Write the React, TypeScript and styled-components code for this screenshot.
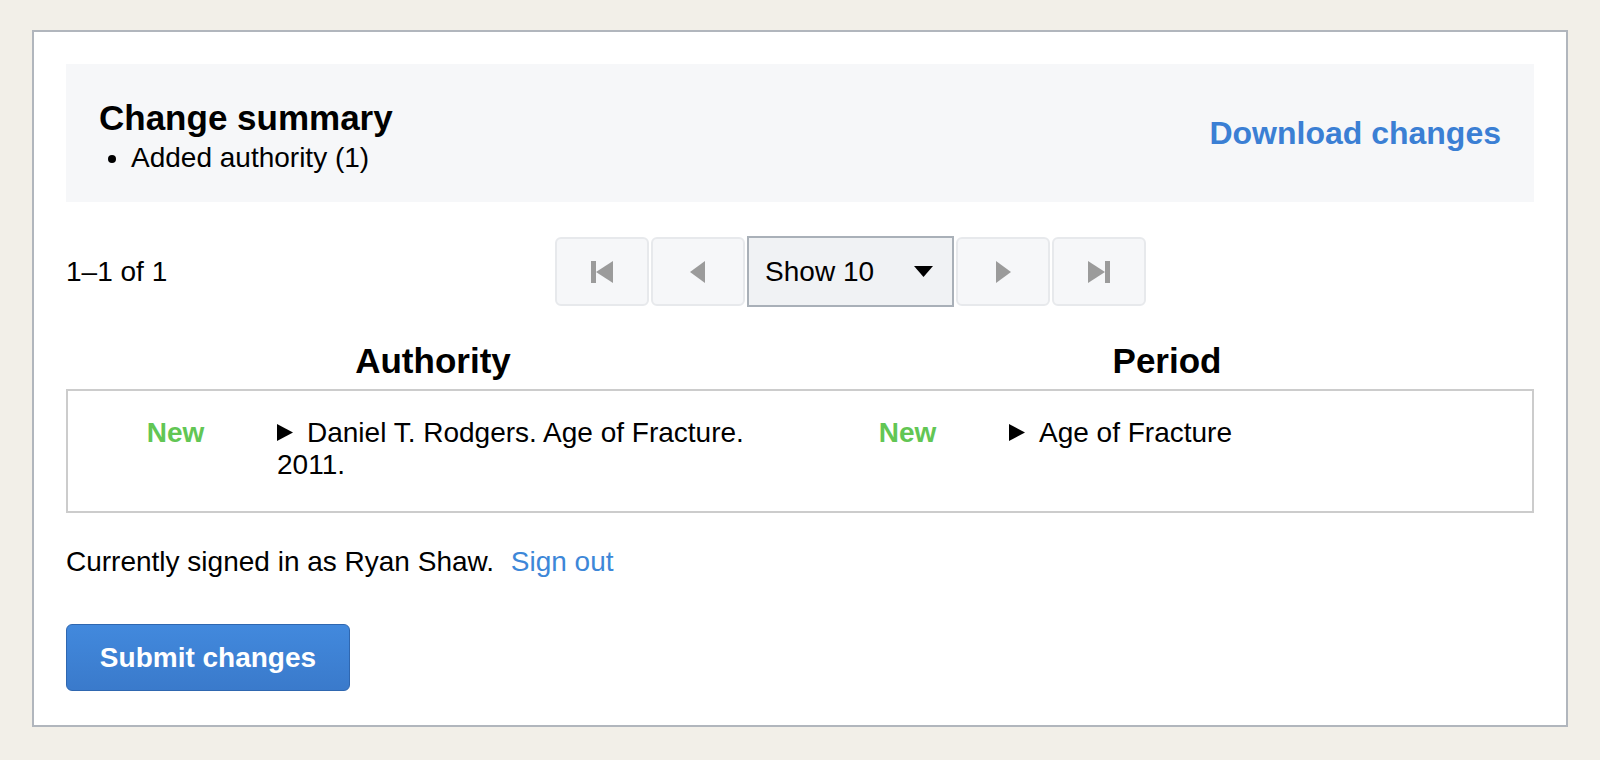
import React from "react";
import styled, { createGlobalStyle } from "styled-components";

const GlobalStyle = createGlobalStyle`
  html, body { margin: 0; padding: 0; }
  body {
    background: #f2efe8;
    font-family: "Liberation Sans", Arial, Helvetica, sans-serif;
    font-size: 28px;
    color: #000;
  }
  * { box-sizing: border-box; }
`;

const Page = styled.div`
  padding: 30px 32px 34px;
`;

const Card = styled.main`
  background: #fff;
  border: 2px solid #b1b6bd;
  padding: 32px 32px 34px;
  display: flex;
  flex-direction: column;
`;

const Summary = styled.section`
  display: flex;
  justify-content: space-between;
  align-items: center;
  background: #f6f7f9;
  padding: 34px 33px 28px 33px;
`;

const SummaryText = styled.div`
  display: flex;
  flex-direction: column;
`;

const Heading = styled.h2`
  margin: 0;
  font-size: 35px;
  line-height: 40px;
  font-weight: bold;
`;

const List = styled.ul`
  margin: 4px 0 0;
  padding-left: 32px;
  line-height: 32px;
`;

const DownloadLink = styled.a`
  margin-bottom: 6px;
  font-size: 32px;
  font-weight: bold;
  color: #3b7fd4;
  text-decoration: none;
  cursor: pointer;
`;

const PagerRow = styled.div`
  display: flex;
  align-items: center;
  margin-top: 34px;
`;

const Count = styled.span`
  flex: none;
  line-height: 32px;
`;

const Pager = styled.nav`
  flex: 1;
  display: flex;
  justify-content: center;
  align-items: center;
  gap: 2px;
`;

const PagerButton = styled.button`
  width: 94px;
  height: 69px;
  display: flex;
  align-items: center;
  justify-content: center;
  background: #f6f7f9;
  border: 2px solid #e7e9ec;
  border-radius: 6px;
  padding: 0;
  cursor: pointer;
`;

const Select = styled.div`
  width: 207px;
  height: 71px;
  display: flex;
  align-items: center;
  justify-content: space-between;
  padding: 0 19px 0 16px;
  background: #f0f2f4;
  border: 2px solid #a9b0b8;
  font-size: 28px;
`;

const HeadRow = styled.div`
  display: grid;
  grid-template-columns: 1fr 1fr;
  margin-top: 34px;
`;

const ColumnTitle = styled.h3`
  margin: 0;
  font-size: 35px;
  line-height: 40px;
  font-weight: bold;
  text-align: center;
`;

const ChangeTable = styled.div`
  margin-top: 8px;
  border: 2px solid #cccccc;
  display: grid;
  grid-template-columns: 1fr 1fr;
  padding: 26px 0 30px;
`;

const Half = styled.div`
  display: grid;
  grid-template-columns: 209px 1fr;
  align-items: start;
  line-height: 32px;
`;

const Status = styled.span`
  padding-left: 6px;
  text-align: center;
  font-weight: bold;
  color: #62c654;
`;

const Entry = styled.div`
  padding-right: 8px;
`;

const Caret = styled.svg`
  width: 16px;
  height: 17px;
  margin-right: 14px;
  vertical-align: 1px;
`;

const Footer = styled.p`
  margin: 33px 0 0;
  line-height: 32px;
`;

const SignOut = styled.a`
  margin-left: 9px;
  color: #3d87d8;
  text-decoration: none;
  cursor: pointer;
`;

const SubmitButton = styled.button`
  align-self: flex-start;
  margin-top: 46px;
  width: 284px;
  height: 67px;
  font-family: "Liberation Sans", Arial, Helvetica, sans-serif;
  font-size: 28px;
  font-weight: bold;
  color: #fff;
  background: linear-gradient(#4289dd, #3a7acb);
  border: 1px solid #2f67b0;
  border-radius: 6px;
  cursor: pointer;
`;

const Icon = ({ kind }: { kind: "first" | "prev" | "next" | "last" }) => {
  const fill = "#9b9b9b";
  return (
    <svg width="24" height="24" viewBox="0 0 24 24">
      {kind === "first" && (
        <>
          <rect x="1" y="1" width="5" height="22" fill={fill} />
          <polygon points="23,1 23,23 6,12" fill={fill} />
        </>
      )}
      {kind === "prev" && <polygon points="19,1 19,23 4,12" fill={fill} />}
      {kind === "next" && <polygon points="5,1 5,23 20,12" fill={fill} />}
      {kind === "last" && (
        <>
          <polygon points="1,1 1,23 18,12" fill={fill} />
          <rect x="18" y="1" width="5" height="22" fill={fill} />
        </>
      )}
    </svg>
  );
};

const DownArrow = () => (
  <svg width="19" height="11" viewBox="0 0 19 11">
    <polygon points="0,0 19,0 9.5,11" fill="#000" />
  </svg>
);

const Disclosure = () => (
  <Caret viewBox="0 0 16 17">
    <polygon points="0,0 16,8.5 0,17" fill="#000" />
  </Caret>
);

export default function App() {
  return (
    <>
      <GlobalStyle />
      <Page>
        <Card>
          <Summary>
            <SummaryText>
              <Heading>Change summary</Heading>
              <List>
                <li>Added authority (1)</li>
              </List>
            </SummaryText>
            <DownloadLink>Download changes</DownloadLink>
          </Summary>

          <PagerRow>
            <Count>1–1 of 1</Count>
            <Pager>
              <PagerButton aria-label="First page"><Icon kind="first" /></PagerButton>
              <PagerButton aria-label="Previous page"><Icon kind="prev" /></PagerButton>
              <Select>
                <span>Show 10</span>
                <DownArrow />
              </Select>
              <PagerButton aria-label="Next page"><Icon kind="next" /></PagerButton>
              <PagerButton aria-label="Last page"><Icon kind="last" /></PagerButton>
            </Pager>
          </PagerRow>

          <HeadRow>
            <ColumnTitle>Authority</ColumnTitle>
            <ColumnTitle>Period</ColumnTitle>
          </HeadRow>

          <ChangeTable>
            <Half>
              <Status>New</Status>
              <Entry>
                <Disclosure />
                Daniel T. Rodgers. Age of Fracture. 2011.
              </Entry>
            </Half>
            <Half>
              <Status>New</Status>
              <Entry>
                <Disclosure />
                Age of Fracture
              </Entry>
            </Half>
          </ChangeTable>

          <Footer>
            Currently signed in as Ryan Shaw. <SignOut>Sign out</SignOut>
          </Footer>

          <SubmitButton>Submit changes</SubmitButton>
        </Card>
      </Page>
    </>
  );
}
